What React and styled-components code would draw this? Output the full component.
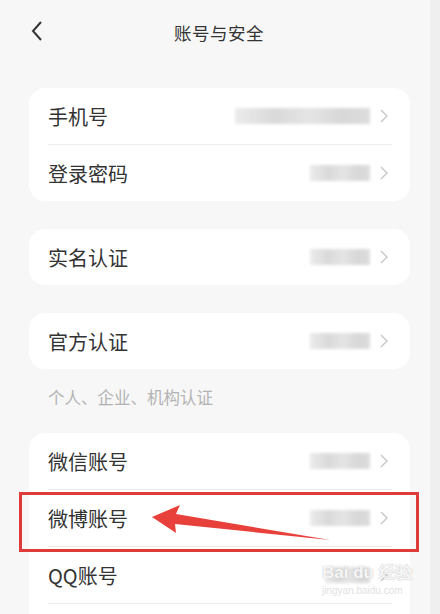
import React from 'react';
import styled, { createGlobalStyle } from 'styled-components';

const Global = createGlobalStyle`
  html, body { margin: 0; padding: 0; background: #f7f7f7; }
  body { font-family: "Noto Sans CJK SC", "Noto Sans", sans-serif; }
`;

const Page = styled.div`
  position: relative;
  width: 440px;
  height: 614px;
  overflow: hidden;
  display: flex;
  align-items: flex-start;
  background: #f7f7f7;
`;

const Main = styled.div`
  width: 430px;
  display: flex;
  flex-direction: column;
  flex-shrink: 0;
`;

const Strip = styled.div`
  width: 10px;
  height: 614px;
  background: #efefef;
`;

const Header = styled.div`
  height: 64px;
  margin-bottom: 24px;
  flex-shrink: 0;
  display: flex;
  align-items: center;
  justify-content: center;
  position: relative;
`;

const Back = styled.div`
  position: absolute;
  left: 30px;
  top: 20px;
  width: 14px;
  height: 22px;
`;

const Title = styled.div`
  font-size: 17.5px;
  color: #333;
  letter-spacing: 0.5px;
  margin-left: 8px;
`;

const Card = styled.div`
  flex-shrink: 0;
  margin: 0 20px 0 29px;
  background: #fff;
  border-radius: 16px;
  padding: 0 18px 0 19px;
  margin-bottom: ${p => (p.$gap === undefined ? 28 : p.$gap)}px;
`;

const Row = styled.div`
  height: 56px;
  display: flex;
  align-items: center;
  border-bottom: ${p => (p.$line ? '1px solid #ececec' : 'none')};
`;

const Label = styled.div`
  flex: 1;
  font-size: 20px;
  color: #333;
`;

const Masked = styled.div`
  width: ${p => p.$w}px;
  height: 16px;
  background: linear-gradient(90deg, #e9e9e9, #d6d6d6 30%, #e2e2e2 55%, #d3d3d3 80%, #dadada);
  filter: blur(1.5px);
  margin-right: 10px;
  opacity: 0.9;
`;

const Chev = styled.svg`
  width: 8px;
  height: 14px;
  margin-right: 4px;
`;

const Caption = styled.div`
  flex-shrink: 0;
  height: 56px;
  padding-bottom: 8px;
  display: flex;
  align-items: center;
  padding-left: 48px;
  font-size: 16.5px;
  color: #b3b3b3;
`;

const Frame = styled.div`
  position: absolute;
  left: 19px;
  top: 492px;
  width: 394px;
  height: 54px;
  border: 3px solid #df3b3b;
`;

const Arrow = styled.svg`
  position: absolute;
  left: 148px;
  top: 500px;
`;

const Mark = styled.div`
  position: absolute;
  left: 322px;
  top: 562px;
  white-space: nowrap;
  color: rgba(255, 255, 255, 0.85);
  text-shadow: 0 0 1px #c8c8c8, 0 0 1px #c8c8c8;
  font-family: "Liberation Sans", Arial, sans-serif;
  font-weight: bold;
  font-size: 17px;
  line-height: 22px;
`;

const MarkSmall = styled.div`
  font-size: 10px;
  font-weight: normal;
  line-height: 14px;
  color: #e2e2e2;
  text-shadow: none;
`;

function Chevron() {
  return (
    <Chev viewBox="0 0 8 14">
      <path d="M1 1l6 6-6 6" fill="none" stroke="#c4c4c4" strokeWidth="1.3" />
    </Chev>
  );
}

function Item({ label, w, line }) {
  return (
    <Row $line={line}>
      <Label>{label}</Label>
      <Masked $w={w} />
      <Chevron />
    </Row>
  );
}

export default function App() {
  return (
    <Page>
      <Global />
      <Main>
        <Header>
          <Back>
            <svg width="14" height="22" viewBox="0 0 14 22">
              <path d="M11 2L3 11l8 9" fill="none" stroke="#333" strokeWidth="2" />
            </svg>
          </Back>
          <Title>账号与安全</Title>
        </Header>
        <Card>
          <Item label="手机号" w={135} line />
          <Item label="登录密码" w={60} />
        </Card>
        <Card>
          <Item label="实名认证" w={60} />
        </Card>
        <Card $gap={0}>
          <Item label="官方认证" w={60} />
        </Card>
        <Caption>个人、企业、机构认证</Caption>
        <Card>
          <Item label="微信账号" w={60} line />
          <Item label="微博账号" w={60} line />
          <Item label="QQ账号" w={45} line />
          <Item label="" w={45} />
        </Card>
      </Main>
      <Strip />
      <Frame />
      <Arrow width="190" height="45" viewBox="0 0 190 45">
        <path d="M4 17 L32 5 L28 14 L182 40 L27 24 L28 33 Z" fill="#e8413b" />
      </Arrow>
      <Mark>
        Bai du 经验
        <MarkSmall>jingyan.baidu.com</MarkSmall>
      </Mark>
    </Page>
  );
}
